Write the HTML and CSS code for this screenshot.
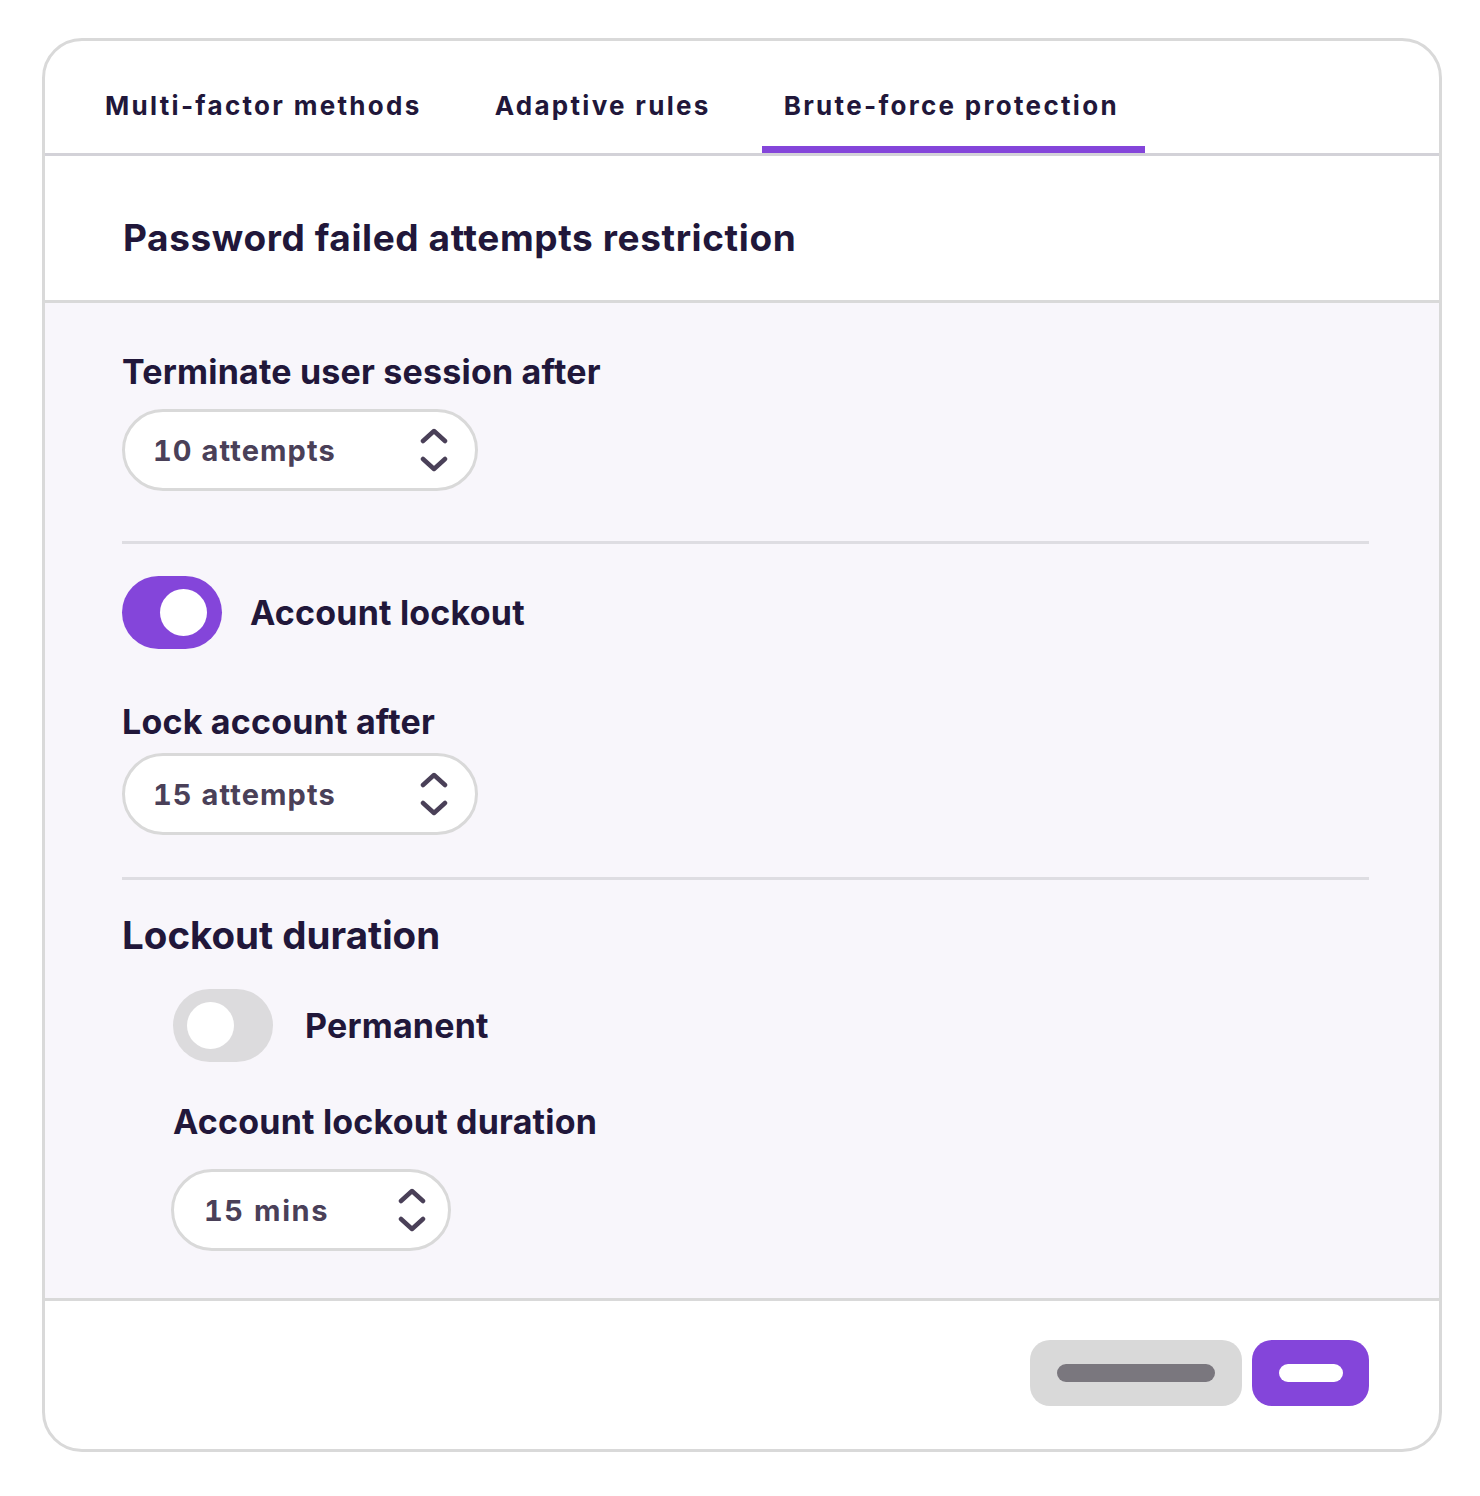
FILE: index.html
```html
<!DOCTYPE html>
<html lang="en">
<head>
<meta charset="utf-8">
<title>Brute-force protection</title>
<link rel="stylesheet" href="styles.css">
</head>
<body>
<div class="card">
  <nav class="tabs">
    <div class="tab">Multi-factor methods</div>
    <div class="tab">Adaptive rules</div>
    <div class="tab tab-active">Brute-force protection</div>
  </nav>
  <header class="card-head">
    <h1 class="title">Password failed attempts restriction</h1>
  </header>
  <section class="card-body">
    <div class="label label-first">Terminate user session after</div>
    <div class="select select-wide">
      <span class="select-value">10 attempts</span>
      <svg class="chev" viewBox="0 0 28 46" width="28" height="46"><path d="M3 14 L14 4 L25 14 M3 32 L14 42 L25 32" fill="none" stroke="#4a4058" stroke-width="4.5" stroke-linecap="round" stroke-linejoin="round"/></svg>
    </div>
    <hr class="divider divider-1">
    <div class="toggle-row toggle-row-1">
      <span class="toggle toggle-on"><span class="knob"></span></span>
      <span class="toggle-label">Account lockout</span>
    </div>
    <div class="label label-lock">Lock account after</div>
    <div class="select select-wide select-2">
      <span class="select-value">15 attempts</span>
      <svg class="chev" viewBox="0 0 28 46" width="28" height="46"><path d="M3 14 L14 4 L25 14 M3 32 L14 42 L25 32" fill="none" stroke="#4a4058" stroke-width="4.5" stroke-linecap="round" stroke-linejoin="round"/></svg>
    </div>
    <hr class="divider divider-2">
    <div class="subtitle">Lockout duration</div>
    <div class="nested">
      <div class="toggle-row toggle-row-2">
        <span class="toggle toggle-off"><span class="knob"></span></span>
        <span class="toggle-label">Permanent</span>
      </div>
      <div class="label label-dur">Account lockout duration</div>
      <div class="select select-narrow">
        <span class="select-value">15 mins</span>
        <svg class="chev" viewBox="0 0 28 46" width="28" height="46"><path d="M3 14 L14 4 L25 14 M3 32 L14 42 L25 32" fill="none" stroke="#4a4058" stroke-width="4.5" stroke-linecap="round" stroke-linejoin="round"/></svg>
      </div>
    </div>
  </section>
  <footer class="card-foot">
    <button class="btn btn-secondary"><span class="bar"></span></button>
    <button class="btn btn-primary"><span class="bar"></span></button>
  </footer>
</div>
</body>
</html>
```
FILE: styles.css
```css
* { box-sizing: border-box; }
body {
  margin: 0;
  background: #ffffff;
  font-family: Inter, Lato, "Liberation Sans", sans-serif;
  color: #21173a;
}
.card {
  margin: 38px 0 0 42px;
  width: 1400px;
  border: 3px solid #d9d9d9;
  border-radius: 40px;
  overflow: hidden;
  background: #fff;
}
.tabs {
  display: flex;
  height: 115px;
  padding-left: 38px;
  gap: 29px;
  border-bottom: 3px solid #d3d2d8;
}
.tab {
  position: relative;
  display: flex;
  align-items: center;
  padding: 16px 22px 0 22px;
  font-size: 26px;
  font-weight: 700;
  letter-spacing: 2.3px;
  color: #21173a;
}
.tab-active {
  padding-right: 26px;
}
.tab-active::after {
  content: "";
  position: absolute;
  left: 0;
  right: 0;
  bottom: 0;
  height: 7px;
  background: #8445da;
}
.card-head {
  height: 147px;
  padding: 18px 0 0 78px;
  display: flex;
  align-items: center;
  border-bottom: 3px solid #d9d9d9;
}
.title {
  margin: 0;
  font-size: 37px;
  font-weight: 700;
  letter-spacing: 0.6px;
}
.card-body {
  background: #f8f6fb;
  height: 998px;
  padding: 51px 70px 0 77px;
  border-bottom: 3px solid #d9d9d9;
  display: flex;
  flex-direction: column;
  align-items: flex-start;
}
.label {
  font-size: 34px;
  line-height: 36px;
  font-weight: 700;
  letter-spacing: 0.2px;
}
.select {
  display: flex;
  align-items: center;
  justify-content: space-between;
  height: 82px;
  border: 3px solid #d9d9d9;
  border-radius: 41px;
  background: #fff;
  margin-top: 19px;
}
.select-wide { width: 356px; padding: 0 27px 0 28px; }
.select-2 { margin-top: 13px; }
.select-narrow { width: 280px; padding: 0 22px 0 30px; margin-top: 29px; margin-left: -2px; }
.select-value {
  font-size: 29px;
  font-weight: 700;
  letter-spacing: 1.1px;
  font-variant-numeric: tabular-nums;
  color: #4a4058;
}
.select-narrow .select-value { letter-spacing: 1.6px; }
.chev { display: block; }
.divider {
  align-self: stretch;
  margin: 50px 0 0;
  border: 0;
  height: 3px;
  background: #dedde2;
}
.divider-2 { margin-top: 42px; }
.toggle-row {
  display: flex;
  align-items: center;
  gap: 30px;
}
.toggle-row-1 { margin-top: 32px; }
.toggle {
  display: flex;
  align-items: center;
  width: 100px;
  height: 73px;
  border-radius: 37px;
  padding: 0 15px;
}
.toggle-on { background: #8445da; justify-content: flex-end; }
.toggle-off { background: #dcdbdd; justify-content: flex-start; padding: 0 14px; }
.knob {
  width: 47px;
  height: 47px;
  border-radius: 50%;
  background: #fff;
}
.toggle-label {
  font-size: 34px;
  font-weight: 700;
  letter-spacing: 0.2px;
}
.toggle-row-1 .toggle-label { margin-left: -2px; }
.toggle-row-2 .toggle-label { margin-left: 2px; }
.label-lock { margin-top: 55px; }
.subtitle {
  margin-top: 34px;
  font-size: 38.5px;
  line-height: 42px;
  font-weight: 700;
}
.nested {
  padding-left: 51px;
  display: flex;
  flex-direction: column;
  align-items: flex-start;
}
.toggle-row-2 { margin-top: 33px; }
.label-dur { margin-top: 42px; }
.card-foot {
  height: 148px;
  display: flex;
  align-items: center;
  justify-content: flex-end;
  gap: 10px;
  padding: 0 70px 0 0;
}
.btn {
  height: 66px;
  border: 0;
  border-radius: 20px;
  display: flex;
  align-items: center;
  justify-content: center;
  padding: 0;
  margin-top: -4px;
}
.btn-secondary { width: 212px; background: #d9d9d9; }
.btn-secondary .bar { width: 158px; background: #7a777e; }
.btn-primary { width: 117px; background: #8445da; }
.btn-primary .bar { width: 64px; background: #fff; }
.bar {
  display: block;
  height: 18px;
  border-radius: 9px;
}
```
